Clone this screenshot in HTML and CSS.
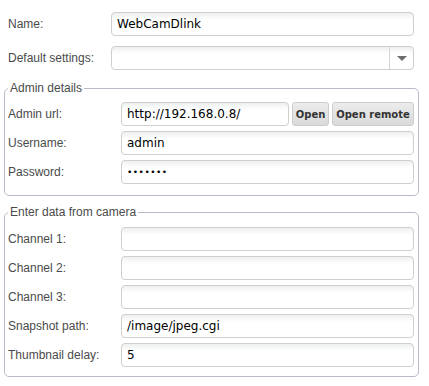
FILE: index.html
```html
<!DOCTYPE html>
<html lang="en">
<head>
  <meta charset="UTF-8">
  <meta name="viewport" content="width=device-width, initial-scale=1">
  <title>Camera settings</title>
  <link rel="stylesheet" href="styles.css">
</head>
<body>
  <div class="page">
    <!-- General settings -->
    <div class="top">
      <div class="row">
        <label for="name">Name:</label>
        <input type="text" id="name" class="field" value="WebCamDlink">
      </div>
      <div class="row">
        <label for="defaults">Default settings:</label>
        <div class="select" id="defaults">
          <span class="select-value"></span>
          <span class="select-arrow"></span>
        </div>
      </div>
    </div>

    <!-- Admin details -->
    <fieldset class="group group-admin">
      <legend>Admin details</legend>
      <div class="row">
        <label for="url">Admin url:</label>
        <div class="url-line">
          <input type="text" id="url" class="field" value="http://192.168.0.8/">
          <button class="btn btn-open">Open</button>
          <button class="btn btn-remote">Open remote</button>
        </div>
      </div>
      <div class="row">
        <label for="user">Username:</label>
        <input type="text" id="user" class="field" value="admin">
      </div>
      <div class="row">
        <label for="pass">Password:</label>
        <input type="password" id="pass" class="field" value="1234567">
      </div>
    </fieldset>

    <!-- Camera data -->
    <fieldset class="group group-camera">
      <legend>Enter data from camera</legend>
      <div class="row">
        <label for="ch1">Channel 1:</label>
        <input type="text" id="ch1" class="field">
      </div>
      <div class="row">
        <label for="ch2">Channel 2:</label>
        <input type="text" id="ch2" class="field">
      </div>
      <div class="row">
        <label for="ch3">Channel 3:</label>
        <input type="text" id="ch3" class="field">
      </div>
      <div class="row">
        <label for="snap">Snapshot path:</label>
        <input type="text" id="snap" class="field" value="/image/jpeg.cgi">
      </div>
      <div class="row">
        <label for="delay">Thumbnail delay:</label>
        <input type="text" id="delay" class="field" value="5">
      </div>
    </fieldset>
  </div>
</body>
</html>
```

FILE: styles.css
```css
/* Page base */
body {
  margin: 0;
  background: #ffffff;
  font-family: "Liberation Sans", Arial, sans-serif;
  font-size: 12px;
  color: #4a4a4a;
}
.page {
  width: 415px;
  padding: 12px 0 0 4px;
}
.top {
  padding: 0 5px 0 4px;
  margin-bottom: 11px;
}
.row {
  display: grid;
  grid-template-columns: 103px 1fr;
  align-items: center;
  height: 24px;
  margin-bottom: 10px;
}
.row:last-child {
  margin-bottom: 0;
}
.row label {
  color: #4a4a4a;
}

/* Text inputs */
.field {
  box-sizing: border-box;
  width: 100%;
  height: 24px;
  margin: 0;
  padding: 0 5px;
  border: 1px solid #cfcfcb;
  border-radius: 4px;
  background: linear-gradient(#eef0f0, #ffffff 7px);
  font-family: "DejaVu Sans", sans-serif;
  font-size: 12px;
  color: #000;
  outline: none;
}
input[type="password"].field {
  font-size: 9px;
  letter-spacing: 0.5px;
}

/* Combo box */
.select {
  box-sizing: border-box;
  height: 24px;
  display: flex;
  border: 1px solid #cfcfcb;
  border-radius: 4px;
  background: linear-gradient(#eef0f0, #ffffff 7px);
}
.select-value {
  flex: 1;
  border-right: 1px solid #d6d6d2;
}
.select-arrow {
  width: 23px;
  display: flex;
  align-items: center;
  justify-content: center;
}
.select-arrow::after {
  content: "";
  border-left: 5px solid transparent;
  border-right: 5px solid transparent;
  border-top: 5px solid #6e6e6e;
}

/* Field groups */
.group {
  margin: 0;
  padding: 7px 4px 11px 3px;
  border: 1px solid #b9bac8;
  border-radius: 5px;
}
.group legend {
  padding: 0 2px;
  line-height: 14px;
  color: #4a4a4a;
}
.group .row {
  grid-template-columns: 113px 1fr;
  margin-bottom: 5px;
}
.group .row:last-child {
  margin-bottom: 0;
}
.group-camera {
  margin-top: 9px;
  padding-top: 8px;
  padding-bottom: 9px;
}

/* Url line with buttons */
.url-line {
  display: flex;
  gap: 3px;
}
.url-line .field {
  flex: 1;
  min-width: 0;
}
.btn {
  height: 24px;
  padding: 0;
  border: 1px solid #cdcdcd;
  border-radius: 3px;
  background: linear-gradient(#ececec, #dadada);
  font-family: "DejaVu Sans", sans-serif;
  font-size: 10px;
  font-weight: bold;
  color: #333;
}
.btn-open {
  width: 37px;
}
.btn-remote {
  width: 82px;
}
```
